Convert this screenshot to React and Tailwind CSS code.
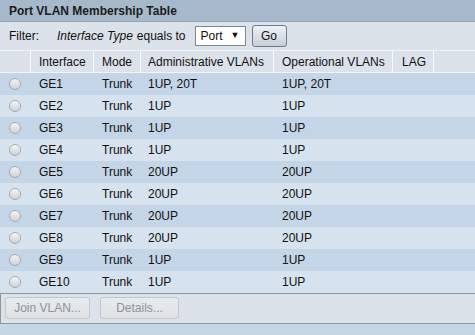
import React from 'react';

const rows = [
  { name: 'GE1', mode: 'Trunk', admin: '1UP, 20T', oper: '1UP, 20T' },
  { name: 'GE2', mode: 'Trunk', admin: '1UP', oper: '1UP' },
  { name: 'GE3', mode: 'Trunk', admin: '1UP', oper: '1UP' },
  { name: 'GE4', mode: 'Trunk', admin: '1UP', oper: '1UP' },
  { name: 'GE5', mode: 'Trunk', admin: '20UP', oper: '20UP' },
  { name: 'GE6', mode: 'Trunk', admin: '20UP', oper: '20UP' },
  { name: 'GE7', mode: 'Trunk', admin: '20UP', oper: '20UP' },
  { name: 'GE8', mode: 'Trunk', admin: '20UP', oper: '20UP' },
  { name: 'GE9', mode: 'Trunk', admin: '1UP', oper: '1UP' },
  { name: 'GE10', mode: 'Trunk', admin: '1UP', oper: '1UP' },
];

const cols = 'grid grid-cols-[30px_63px_47px_133px_119px_41px_1fr]';

const App = () => {
  return (
    <div
      className="w-[475px] h-[335px] bg-[#c5d6e7] text-[12px] text-[#111] overflow-hidden"
      style={{ fontFamily: '"Liberation Sans", Arial, sans-serif' }}
    >
      {/* title bar */}
      <div className="h-[22px] bg-[#a6b9ca] border-b border-[#8fa2b3] pl-[9px] flex items-center font-bold text-[#1c1c1c]">
        Port VLAN Membership Table
      </div>

      {/* filter */}
      <div className="h-[28px] bg-[#dbe2e9] pl-[9px] flex items-center">
        <span>Filter:</span>
        <span className="ml-[18px] italic">Interface Type</span>
        <span className="ml-[4px]">equals to</span>
        <div className="ml-[9px] w-[51px] h-[20px] bg-white border border-[#7d8893] flex items-center justify-between pl-[5px] pr-[5px]">
          <span>Port</span>
          <span className="text-[9px]">▼</span>
        </div>
        <div className="ml-[6px] w-[35px] h-[22px] rounded-[3px] border border-[#6e7c88] bg-gradient-to-b from-[#eef1f4] to-[#c6cfd8] flex items-center justify-center">
          Go
        </div>
      </div>

      {/* header */}
      <div className={`${cols} h-[23px] bg-[#dbe2e9] border-y border-[#f2f5f8]`}>
        <div />
        <div className="border-l border-[#f7f9fb] pl-[8px] flex items-center">Interface</div>
        <div className="border-l border-[#f7f9fb] pl-[8px] flex items-center">Mode</div>
        <div className="border-l border-[#f7f9fb] pl-[7px] flex items-center">Administrative VLANs</div>
        <div className="border-l border-[#f7f9fb] pl-[8px] flex items-center">Operational VLANs</div>
        <div className="border-l border-[#f7f9fb] pl-[9px] flex items-center">LAG</div>
        <div className="border-l border-[#f7f9fb]" />
      </div>

      {/* rows */}
      {rows.map((r, i) => (
        <div
          key={r.name}
          className={`${cols} h-[22px] ${i % 2 === 0 ? 'bg-[#c4d5e7]' : 'bg-[#d6e2ee]'}`}
        >
          <div className="flex items-center justify-center">
            <div className="w-[12px] h-[12px] rounded-full border border-[#a4a9ae] bg-gradient-to-b from-[#f6f6f6] to-[#cfd1d3]" />
          </div>
          <div className="pl-[9px] flex items-center">{r.name}</div>
          <div className="pl-[9px] flex items-center">{r.mode}</div>
          <div className="pl-[8px] flex items-center">{r.admin}</div>
          <div className="pl-[9px] flex items-center">{r.oper}</div>
          <div />
          <div />
        </div>
      ))}

      {/* buttons */}
      <div className="h-[31px] bg-[#dbe2e9] border-y border-l border-[#8a979f] pt-[3px] pl-[4px] flex items-start gap-[10px]">
        <div className="w-[85px] h-[22px] rounded-[3px] border border-[#c3c8cd] bg-gradient-to-b from-[#e9ecef] to-[#dde1e5] text-[#8d9399] flex items-center justify-center">
          Join VLAN...
        </div>
        <div className="w-[79px] h-[22px] rounded-[3px] border border-[#c3c8cd] bg-gradient-to-b from-[#e9ecef] to-[#dde1e5] text-[#8d9399] flex items-center justify-center">
          Details...
        </div>
      </div>
    </div>
  );
};

export default App;
